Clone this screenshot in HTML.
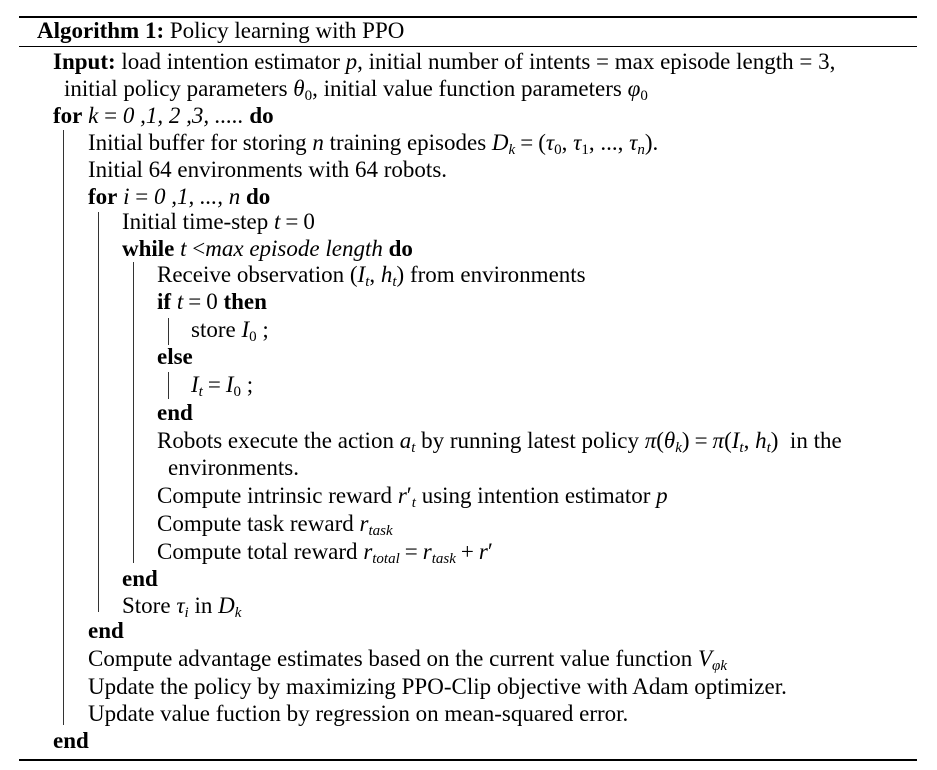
<!DOCTYPE html>
<html><head><meta charset="utf-8"><style>
body{margin:0;width:937px;height:770px;background:#fff;position:relative;overflow:hidden;font-family:"Liberation Serif",serif;font-size:23px;color:#000}
.l{position:absolute;white-space:nowrap;line-height:26px}
.r{position:absolute;left:19px;width:898px;background:#000}
.v{position:absolute;width:1px;background:#333}
i{font-style:italic}
sub{font-size:15px;vertical-align:-4px;line-height:0}
.m{margin:0 5px}
</style></head><body>
<div class="r" style="top:16px;height:2px"></div>
<div class="r" style="top:46px;height:1px"></div>
<div class="r" style="top:759px;height:2px"></div>
<div class="v" style="left:63px;top:130px;height:595px"></div>
<div class="v" style="left:98px;top:212px;height:400px"></div>
<div class="v" style="left:133px;top:262px;height:301px"></div>
<div class="v" style="left:168px;top:318px;height:27px"></div>
<div class="v" style="left:168px;top:372px;height:27px"></div>

<div class="l" style="left:37px;top:18px"><b>Algorithm 1:</b> Policy learning with PPO</div>
<div class="l" style="left:53px;top:49px"><b>Input:</b> load intention estimator <i>p</i>, initial number of intents = max episode length = 3,</div>
<div class="l" style="left:64px;top:76px">initial policy parameters <i>θ</i><sub>0</sub>, initial value function parameters <i>φ</i><sub>0</sub></div>
<div class="l" style="left:53px;top:103px"><b>for</b> <i>k</i> = <i>0 ,1, 2 ,3, .....</i> <b>do</b></div>
<div class="l" style="left:88px;top:130px">Initial buffer for storing <i>n</i> training episodes <i>D<sub>k</sub></i><span class="m">=</span>(<i>τ</i><sub>0</sub>, <i>τ</i><sub>1</sub>, ..., <i>τ<sub>n</sub></i>).</div>
<div class="l" style="left:88px;top:157px">Initial 64 environments with 64 robots.</div>
<div class="l" style="left:88px;top:184px"><b>for</b> <i>i</i> = <i>0 ,1, ...,</i> <i>n</i> <b>do</b></div>
<div class="l" style="left:122px;top:209px">Initial time-step <i>t</i><span class="m">=</span>0</div>
<div class="l" style="left:122px;top:236px"><b>while</b> <i>t</i> &lt;<i>max episode length</i> <b>do</b></div>
<div class="l" style="left:157px;top:262px">Receive observation (<i>I<sub>t</sub></i>, <i>h<sub>t</sub></i>) from environments</div>
<div class="l" style="left:157px;top:289px"><b>if</b> <i>t</i><span class="m">=</span>0 <b>then</b></div>
<div class="l" style="left:191px;top:317px">store <i>I</i><sub>0</sub> ;</div>
<div class="l" style="left:157px;top:344px"><b>else</b></div>
<div class="l" style="left:191px;top:372px"><i>I<sub>t</sub></i><span class="m">=</span><i>I</i><sub>0</sub> ;</div>
<div class="l" style="left:157px;top:400px"><b>end</b></div>
<div class="l" style="left:157px;top:428px">Robots execute the action <i>a<sub>t</sub></i> by running latest policy <i>π</i>(<i>θ<sub>k</sub></i>)<span class="m">=</span><i>π</i>(<i>I<sub>t</sub></i>, <i>h<sub>t</sub></i>)&nbsp; in the</div>
<div class="l" style="left:168px;top:455px">environments.</div>
<div class="l" style="left:157px;top:483px">Compute intrinsic reward <i>r</i>′<sub><i>t</i></sub> using intention estimator <i>p</i></div>
<div class="l" style="left:157px;top:511px">Compute task reward <i>r<sub>task</sub></i></div>
<div class="l" style="left:157px;top:539px">Compute total reward <i>r<sub>total</sub></i><span class="m">=</span><i>r<sub>task</sub></i><span class="m">+</span><i>r</i>′</div>
<div class="l" style="left:122px;top:566px"><b>end</b></div>
<div class="l" style="left:122px;top:593px">Store <i>τ<sub>i</sub></i> in <i>D<sub>k</sub></i></div>
<div class="l" style="left:88px;top:618px"><b>end</b></div>
<div class="l" style="left:88px;top:646px">Compute advantage estimates based on the current value function <i>V<sub>φk</sub></i></div>
<div class="l" style="left:88px;top:674px">Update the policy by maximizing PPO-Clip objective with Adam optimizer.</div>
<div class="l" style="left:88px;top:701px">Update value fuction by regression on mean-squared error.</div>
<div class="l" style="left:53px;top:728px"><b>end</b></div>
</body></html>
